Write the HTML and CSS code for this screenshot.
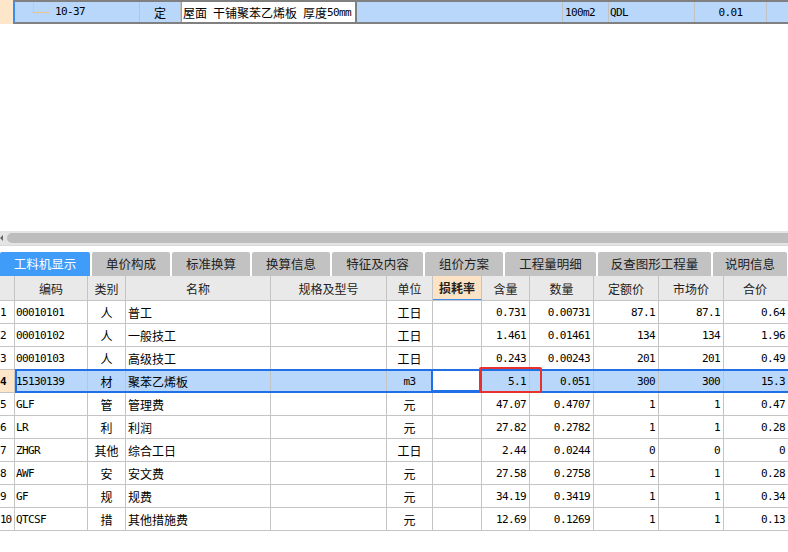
FILE: index.html
```html
<!DOCTYPE html>
<html>
<head>
<meta charset="utf-8">
<link rel="stylesheet" href="styles.css">
</head>
<body>
<div class="app">
  <div class="upper">
    <div class="qrow">
      <div class="qnum"></div>
      <div class="qbody">
        <div class="qc qcode"><span class="tree"></span><span class="num">10-37</span></div>
        <div class="qc qtype">定</div>
        <div class="qc qname">屋面&ensp;干铺聚苯乙烯板&ensp;厚度<span class="num">50mm</span></div>
        <div class="qc qspec"></div>
        <div class="qc qunit"><span class="num">100m2</span></div>
        <div class="qc qexp"><span class="num">QDL</span></div>
        <div class="qc qqty"><span class="num">0.01</span></div>
        <div class="qc qlast"></div>
      </div>
    </div>
  </div>
  <div class="hscroll"><span class="sarrow"></span><div class="thumb"></div></div>
  <div class="tabbar">
    <div class="tab active w90">工料机显示</div>
    <div class="tab w78">单价构成</div>
    <div class="tab w78">标准换算</div>
    <div class="tab w78">换算信息</div>
    <div class="tab w91">特征及内容</div>
    <div class="tab w78">组价方案</div>
    <div class="tab w91">工程量明细</div>
    <div class="tab w113">反查图形工程量</div>
    <div class="tab w74">说明信息</div>
  </div>
  <div class="grid">
    <div class="row head">
      <div class="c n"></div>
      <div class="c c1 ctr">编码</div>
      <div class="c c2 ctr">类别</div>
      <div class="c c3 ctr">名称</div>
      <div class="c c4 ctr">规格及型号</div>
      <div class="c c5 ctr">单位</div>
      <div class="c c6 ctr loss">损耗率</div>
      <div class="c c7 ctr">含量</div>
      <div class="c c8 ctr">数量</div>
      <div class="c c9 ctr">定额价</div>
      <div class="c c10 ctr">市场价</div>
      <div class="c c11 ctr">合价</div>
    </div>
    <div class="row">
      <div class="c n num">1</div><div class="c c1 num">00010101</div><div class="c c2 ctr">人</div><div class="c c3">普工</div><div class="c c4"></div><div class="c c5 ctr">工日</div><div class="c c6"></div><div class="c c7 r num">0.731</div><div class="c c8 r num">0.00731</div><div class="c c9 r num">87.1</div><div class="c c10 r num">87.1</div><div class="c c11 r num">0.64</div>
    </div>
    <div class="row">
      <div class="c n num">2</div><div class="c c1 num">00010102</div><div class="c c2 ctr">人</div><div class="c c3">一般技工</div><div class="c c4"></div><div class="c c5 ctr">工日</div><div class="c c6"></div><div class="c c7 r num">1.461</div><div class="c c8 r num">0.01461</div><div class="c c9 r num">134</div><div class="c c10 r num">134</div><div class="c c11 r num">1.96</div>
    </div>
    <div class="row">
      <div class="c n num">3</div><div class="c c1 num">00010103</div><div class="c c2 ctr">人</div><div class="c c3">高级技工</div><div class="c c4"></div><div class="c c5 ctr">工日</div><div class="c c6"></div><div class="c c7 r num">0.243</div><div class="c c8 r num">0.00243</div><div class="c c9 r num">201</div><div class="c c10 r num">201</div><div class="c c11 r num">0.49</div>
    </div>
    <div class="row sel">
      <div class="c n num">4</div><div class="c c1 num">15130139</div><div class="c c2 ctr">材</div><div class="c c3">聚苯乙烯板</div><div class="c c4"></div><div class="c c5 ctr num">m3</div><div class="c c6 cur"></div><div class="c c7 r num">5.1</div><div class="c c8 r num">0.051</div><div class="c c9 r num">300</div><div class="c c10 r num">300</div><div class="c c11 r num">15.3</div>
    </div>
    <div class="row">
      <div class="c n num">5</div><div class="c c1 num">GLF</div><div class="c c2 ctr">管</div><div class="c c3">管理费</div><div class="c c4"></div><div class="c c5 ctr">元</div><div class="c c6"></div><div class="c c7 r num">47.07</div><div class="c c8 r num">0.4707</div><div class="c c9 r num">1</div><div class="c c10 r num">1</div><div class="c c11 r num">0.47</div>
    </div>
    <div class="row">
      <div class="c n num">6</div><div class="c c1 num">LR</div><div class="c c2 ctr">利</div><div class="c c3">利润</div><div class="c c4"></div><div class="c c5 ctr">元</div><div class="c c6"></div><div class="c c7 r num">27.82</div><div class="c c8 r num">0.2782</div><div class="c c9 r num">1</div><div class="c c10 r num">1</div><div class="c c11 r num">0.28</div>
    </div>
    <div class="row">
      <div class="c n num">7</div><div class="c c1 num">ZHGR</div><div class="c c2 ctr">其他</div><div class="c c3">综合工日</div><div class="c c4"></div><div class="c c5 ctr">工日</div><div class="c c6"></div><div class="c c7 r num">2.44</div><div class="c c8 r num">0.0244</div><div class="c c9 r num">0</div><div class="c c10 r num">0</div><div class="c c11 r num">0</div>
    </div>
    <div class="row">
      <div class="c n num">8</div><div class="c c1 num">AWF</div><div class="c c2 ctr">安</div><div class="c c3">安文费</div><div class="c c4"></div><div class="c c5 ctr">元</div><div class="c c6"></div><div class="c c7 r num">27.58</div><div class="c c8 r num">0.2758</div><div class="c c9 r num">1</div><div class="c c10 r num">1</div><div class="c c11 r num">0.28</div>
    </div>
    <div class="row">
      <div class="c n num">9</div><div class="c c1 num">GF</div><div class="c c2 ctr">规</div><div class="c c3">规费</div><div class="c c4"></div><div class="c c5 ctr">元</div><div class="c c6"></div><div class="c c7 r num">34.19</div><div class="c c8 r num">0.3419</div><div class="c c9 r num">1</div><div class="c c10 r num">1</div><div class="c c11 r num">0.34</div>
    </div>
    <div class="row">
      <div class="c n num">10</div><div class="c c1 num">QTCSF</div><div class="c c2 ctr">措</div><div class="c c3">其他措施费</div><div class="c c4"></div><div class="c c5 ctr">元</div><div class="c c6"></div><div class="c c7 r num">12.69</div><div class="c c8 r num">0.1269</div><div class="c c9 r num">1</div><div class="c c10 r num">1</div><div class="c c11 r num">0.13</div>
    </div>
    <div class="redbox"></div>
  </div>
</div>
</body>
</html>
```

FILE: styles.css
```css
* { box-sizing: border-box; }
html, body { margin: 0; padding: 0; background: #fff; }
body {
  width: 788px;
  height: 552px;
  overflow: hidden;
  font-family: "Noto Sans CJK SC", "Noto Sans", sans-serif;
  font-size: 12px;
  color: #000;
}
.app { width: 788px; height: 552px; overflow: hidden; }
.num {
  font-family: "DejaVu Sans Mono", "Liberation Mono", monospace;
  font-size: 11px;
  letter-spacing: -0.6px;
}

/* upper grid */
.upper { height: 231px; }
.qrow { display: flex; height: 24px; }
.qnum { width: 13px; background: #fde6c9; }
.qbody {
  flex: 1;
  display: flex;
  background: #b8d7fb;
  border-top: 2px solid #808080;
  border-bottom: 2px solid #808080;
  border-left: 2px solid #3a8ef0;
  overflow: hidden;
}
.qc {
  display: flex;
  align-items: center;
  height: 20px;
  border-right: 1px solid #c2c2c2;
  white-space: nowrap;
  flex: none;
}
.qcode { width: 125px; align-items: flex-start; }
.qcode .num { margin-left: 6px; line-height: 20px; }
.tree {
  display: block;
  margin-left: 18px;
  width: 16px;
  height: 11px;
  border-left: 1px solid #f3c17e;
  border-bottom: 1px solid #f3c17e;
}
.qtype { width: 41px; justify-content: center; }
.qname {
  width: 176px;
  background: #fff;
  border-left: 1px solid #a0a0a0;
  border-right: 2px solid #808080;
  padding-left: 1px;
}
.qspec { width: 206px; }
.qunit { width: 46px; padding-left: 2px; }
.qexp { width: 86px; padding-left: 1px; }
.qqty { width: 72px; justify-content: center; }
.qlast { width: 40px; border-right: none; }

/* scrollbar */
.hscroll {
  position: relative;
  height: 14px;
  background: #e4e4e4;
  padding: 2px 0 2px 7px;
}
.thumb {
  height: 10px;
  background: #bdbdbd;
  border-radius: 5px 0 0 5px;
}
.sarrow {
  position: absolute;
  left: 0;
  top: 4px;
  width: 0;
  height: 0;
  border-top: 3px solid transparent;
  border-bottom: 3px solid transparent;
  border-right: 3px solid #666;
}

/* tabs */
.tabbar {
  display: flex;
  gap: 2px;
  height: 31px;
  padding-top: 6px;
  border-top: 1px solid #d8d8d8;
  background: #fff;
  white-space: nowrap;
  overflow: hidden;
}
.tab {
  flex: none;
  height: 24px;
  line-height: 24px;
  text-align: center;
  background: #c2c2c2;
  color: #222;
  font-size: 12.5px;
  border-radius: 2px 2px 0 0;
}
.tab.active { background: #3f9cf9; color: #fff; }
.w90 { width: 90px; }
.w78 { width: 78px; }
.w74 { width: 74px; }
.w91 { width: 91px; }
.w113 { width: 113px; }

/* lower grid */
.grid { position: relative; width: 788px; overflow: hidden; }
.row {
  position: relative;
  display: flex;
  height: 23px;
  border-bottom: 1px solid #c4c4c4;
  width: 788px;
}
.row.head { height: 25px; background: #e9e9e9; color: #222; }
.c {
  flex: none;
  height: 100%;
  border-right: 1px solid #c4c4c4;
  display: flex;
  align-items: center;
  padding-left: 2px;
  white-space: nowrap;
  overflow: hidden;
}
.c.ctr { justify-content: center; padding-left: 0; }
.c.r { justify-content: flex-end; padding-left: 0; padding-right: 3px; }
.n { width: 15px; padding-left: 0; }
.row .n.num { padding-left: 0; letter-spacing: -1px; }
.c1 { width: 73px; padding-left: 1px; }
.c2 { width: 38px; }
.c3 { width: 145px; }
.c4 { width: 116px; }
.c5 { width: 46px; }
.c6 { width: 49px; }
.c7 { width: 48px; }
.c8 { width: 64px; }
.c9 { width: 65px; }
.c10 { width: 65px; }
.c11 { width: 64px; border-right: none; padding-right: 2px; }
.head .loss {
  background: #fde3c5;
  font-weight: bold;
  border-bottom: 1px solid #3a8ef0;
}
.sel .c { background: #b8d7fb; }
.sel .n { background: #fde6c9; font-weight: bold; }
.sel .cur { background: #fff; position: relative; overflow: visible; }
.sel::after {
  content: "";
  position: absolute;
  left: 15px;
  top: -1px;
  right: -4px;
  bottom: -1px;
  border: 2px solid #1f6fe6;
  pointer-events: none;
}
.sel .cur::after {
  content: "";
  position: absolute;
  left: -2px;
  top: -1px;
  right: -1px;
  bottom: 0;
  border: 2px solid #1f6fe6;
}
.redbox {
  position: absolute;
  left: 479px;
  top: 91px;
  width: 63px;
  height: 26px;
  border: 2px solid #e8302c;
  border-radius: 2px;
}
```
